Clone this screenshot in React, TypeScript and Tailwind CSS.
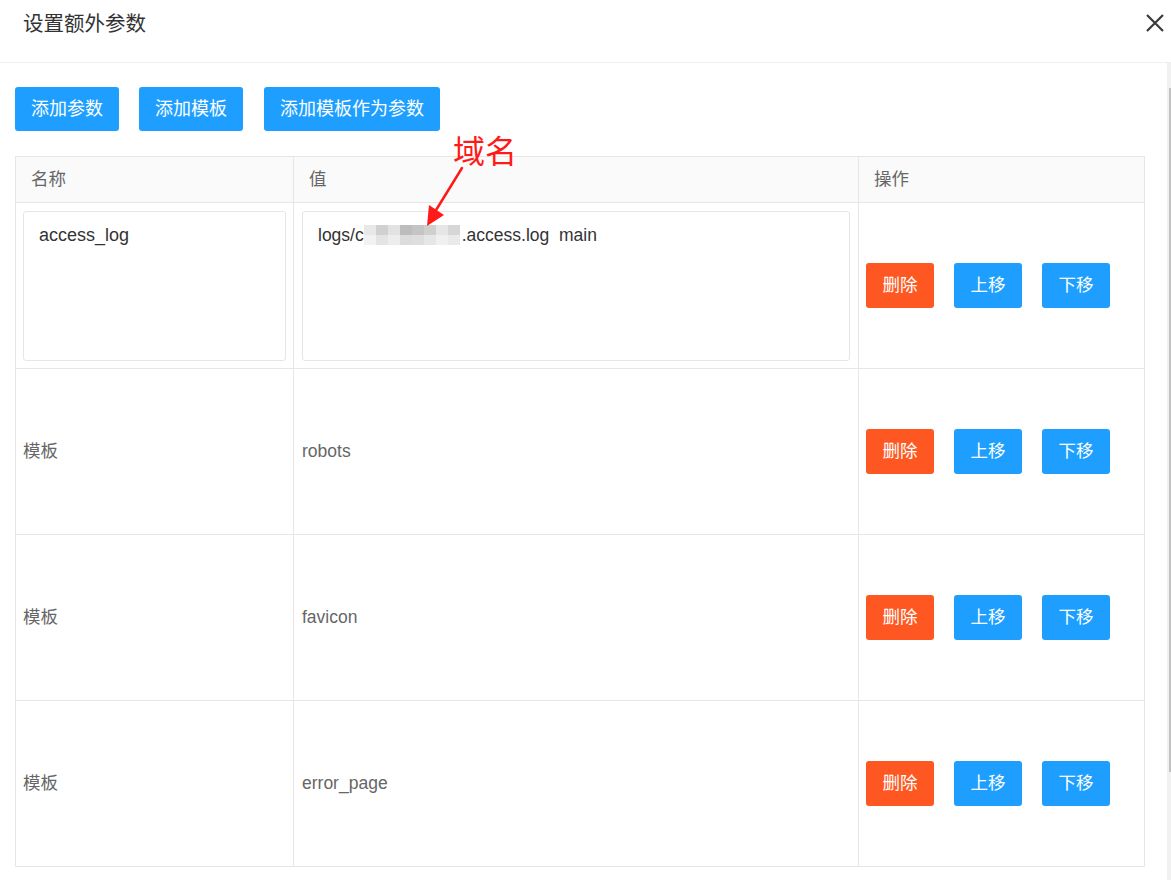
import React from "react";

const font = { fontFamily: '"Liberation Sans", "Noto Sans CJK SC", sans-serif' };

function Btn({ children, red }: { children: React.ReactNode; red?: boolean }) {
  return (
    <button
      className={
        (red ? "bg-[#ff5722]" : "bg-[#1e9fff]") +
        " h-[45px] w-[68px] rounded-[3px] text-white text-[17.5px] leading-none flex items-center justify-center"
      }
    >
      {children}
    </button>
  );
}

function Actions() {
  return (
    <div className="flex items-center gap-[20px] pl-[7px]">
      <Btn red>删除</Btn>
      <Btn>上移</Btn>
      <Btn>下移</Btn>
    </div>
  );
}

function Blur() {
  const cells = [
    ["#e8e8e8", "#d0d0d0", "#e2e2e2", "#bdbdbd", "#c4c4c4", "#cfcfcf", "#e6e6e6", "#d6d6d6"],
    ["#f2f2f2", "#e4e4e4", "#ededed", "#dcdcdc", "#dedede", "#e6e6e6", "#f0f0f0", "#eaeaea"],
  ];
  return (
    <span className="inline-flex flex-col align-middle w-[96px] mr-[2px]">
      {cells.map((row, i) => (
        <span key={i} className="flex h-[10px]">
          {row.map((c, j) => (
            <span key={j} className="flex-1" style={{ backgroundColor: c }} />
          ))}
        </span>
      ))}
    </span>
  );
}

export default function App() {
  const templates = ["robots", "favicon", "error_page"];
  return (
    <div className="relative w-[1171px] h-[880px] bg-white overflow-hidden text-[#333]" style={font}>
      <div className="h-[63px] border-b border-[#eeeeee] flex items-center justify-between pl-[23px] pr-[6px]">
        <div className="text-[20.5px] leading-none -mt-[13px]">设置额外参数</div>
        <svg width="20" height="20" viewBox="0 0 20 20" className="-mt-[16px]">
          <path d="M2 2 L18 18 M18 2 L2 18" stroke="#3a3a3a" strokeWidth="2.2" />
        </svg>
      </div>
      <div className="flex h-[817px]">
        <div className="flex-1 pl-[15px] pr-[22px]">
          <div className="flex mt-[24px]">
            <button className="h-[44px] w-[104px] bg-[#1e9fff] rounded-[3px] text-white text-[18px] leading-none">添加参数</button>
            <button className="h-[44px] w-[104px] ml-[20px] bg-[#1e9fff] rounded-[3px] text-white text-[18px] leading-none">添加模板</button>
            <button className="h-[44px] w-[176px] ml-[21px] bg-[#1e9fff] rounded-[3px] text-white text-[18px] leading-none">添加模板作为参数</button>
          </div>
          <table className="mt-[25px] w-[1130px] border-collapse table-fixed text-[17.5px]">
            <colgroup>
              <col className="w-[278px]" />
              <col className="w-[565px]" />
              <col />
            </colgroup>
            <thead>
              <tr className="h-[46px] bg-[#fafafa] text-[#666]">
                <th className="border border-[#e6e6e6] text-left font-normal pl-[15px]">名称</th>
                <th className="border border-[#e6e6e6] text-left font-normal pl-[15px]">值</th>
                <th className="border border-[#e6e6e6] text-left font-normal pl-[15px]">操作</th>
              </tr>
            </thead>
            <tbody>
              <tr className="h-[166px]">
                <td className="border border-[#e6e6e6] p-0">
                  <div className="mx-[7px] h-[150px] border border-[#e6e6e6] rounded-[3px] pl-[15px] pt-[12px] text-[18px] text-[#333] leading-[22px]">
                    access_log
                  </div>
                </td>
                <td className="border border-[#e6e6e6] p-0">
                  <div className="mx-[8px] h-[150px] border border-[#e6e6e6] rounded-[3px] pl-[15px] pt-[12px] text-[17.5px] text-[#333] leading-[22px] whitespace-pre">
                    <span className="inline-flex items-center">
                      logs/c<Blur />.access.log  main
                    </span>
                  </div>
                </td>
                <td className="border border-[#e6e6e6] p-0">
                  <Actions />
                </td>
              </tr>
              {templates.map((t) => (
                <tr key={t} className="h-[166px] text-[#666]">
                  <td className="border border-[#e6e6e6] pl-[7px]">模板</td>
                  <td className="border border-[#e6e6e6] pl-[8px]">{t}</td>
                  <td className="border border-[#e6e6e6] p-0">
                    <Actions />
                  </td>
                </tr>
              ))}
            </tbody>
          </table>
        </div>
        <div className="w-[4px] bg-[#f1f1f1] flex justify-end">
          <div className="w-[2px] mt-[25px] h-[684px] bg-[#c1c1c1]" />
        </div>
      </div>

      <div className="absolute left-[453px] top-[136px] text-[32px] leading-none text-[#ff1a1a]">域名</div>
      <svg className="absolute left-[415px] top-[160px]" width="60" height="75" viewBox="0 0 60 75">
        <path d="M47 8 L18 55" stroke="#ff1a1a" strokeWidth="2.5" strokeLinecap="round" />
        <path d="M12 66 L14 45 L29 55 Z" fill="#ff1a1a" />
      </svg>
    </div>
  );
}
